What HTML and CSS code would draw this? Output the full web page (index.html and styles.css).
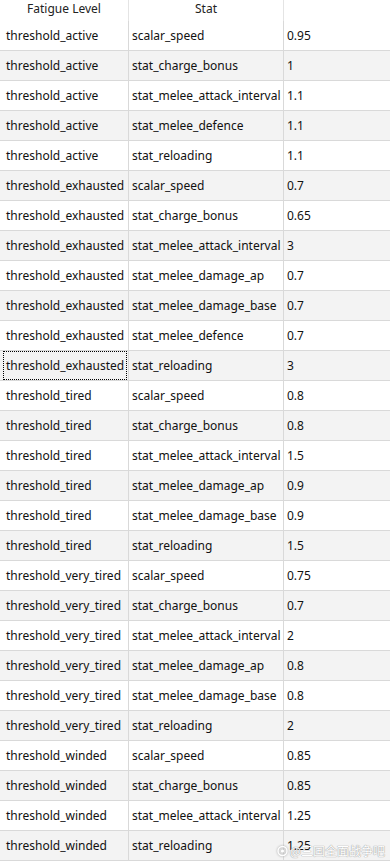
FILE: index.html
```html
<!DOCTYPE html>
<html>
<head>
<meta charset="utf-8">
<link rel="stylesheet" href="styles.css">
</head>
<body>
<div class="sheet">
  <div class="grid">
    <div class="hd c1">Fatigue Level</div><div class="hd c2">Stat</div><div class="hd c3"></div>

    <div class="cell c1">threshold_active</div><div class="cell c2">scalar_speed</div><div class="cell c3">0.95</div>
    <div class="cell c1 alt">threshold_active</div><div class="cell c2 alt">stat_charge_bonus</div><div class="cell c3 alt">1</div>
    <div class="cell c1">threshold_active</div><div class="cell c2">stat_melee_attack_interval</div><div class="cell c3">1.1</div>
    <div class="cell c1 alt">threshold_active</div><div class="cell c2 alt">stat_melee_defence</div><div class="cell c3 alt">1.1</div>
    <div class="cell c1">threshold_active</div><div class="cell c2">stat_reloading</div><div class="cell c3">1.1</div>
    <div class="cell c1 alt">threshold_exhausted</div><div class="cell c2 alt">scalar_speed</div><div class="cell c3 alt">0.7</div>
    <div class="cell c1">threshold_exhausted</div><div class="cell c2">stat_charge_bonus</div><div class="cell c3">0.65</div>
    <div class="cell c1 alt">threshold_exhausted</div><div class="cell c2 alt">stat_melee_attack_interval</div><div class="cell c3 alt">3</div>
    <div class="cell c1">threshold_exhausted</div><div class="cell c2">stat_melee_damage_ap</div><div class="cell c3">0.7</div>
    <div class="cell c1 alt">threshold_exhausted</div><div class="cell c2 alt">stat_melee_damage_base</div><div class="cell c3 alt">0.7</div>
    <div class="cell c1">threshold_exhausted</div><div class="cell c2">stat_melee_defence</div><div class="cell c3">0.7</div>
    <div class="cell c1 alt focus"><span class="focusbox"></span>threshold_exhausted</div><div class="cell c2 alt">stat_reloading</div><div class="cell c3 alt">3</div>
    <div class="cell c1">threshold_tired</div><div class="cell c2">scalar_speed</div><div class="cell c3">0.8</div>
    <div class="cell c1 alt">threshold_tired</div><div class="cell c2 alt">stat_charge_bonus</div><div class="cell c3 alt">0.8</div>
    <div class="cell c1">threshold_tired</div><div class="cell c2">stat_melee_attack_interval</div><div class="cell c3">1.5</div>
    <div class="cell c1 alt">threshold_tired</div><div class="cell c2 alt">stat_melee_damage_ap</div><div class="cell c3 alt">0.9</div>
    <div class="cell c1">threshold_tired</div><div class="cell c2">stat_melee_damage_base</div><div class="cell c3">0.9</div>
    <div class="cell c1 alt">threshold_tired</div><div class="cell c2 alt">stat_reloading</div><div class="cell c3 alt">1.5</div>
    <div class="cell c1">threshold_very_tired</div><div class="cell c2">scalar_speed</div><div class="cell c3">0.75</div>
    <div class="cell c1 alt">threshold_very_tired</div><div class="cell c2 alt">stat_charge_bonus</div><div class="cell c3 alt">0.7</div>
    <div class="cell c1">threshold_very_tired</div><div class="cell c2">stat_melee_attack_interval</div><div class="cell c3">2</div>
    <div class="cell c1 alt">threshold_very_tired</div><div class="cell c2 alt">stat_melee_damage_ap</div><div class="cell c3 alt">0.8</div>
    <div class="cell c1">threshold_very_tired</div><div class="cell c2">stat_melee_damage_base</div><div class="cell c3">0.8</div>
    <div class="cell c1 alt">threshold_very_tired</div><div class="cell c2 alt">stat_reloading</div><div class="cell c3 alt">2</div>
    <div class="cell c1">threshold_winded</div><div class="cell c2">scalar_speed</div><div class="cell c3">0.85</div>
    <div class="cell c1 alt">threshold_winded</div><div class="cell c2 alt">stat_charge_bonus</div><div class="cell c3 alt">0.85</div>
    <div class="cell c1">threshold_winded</div><div class="cell c2">stat_melee_attack_interval</div><div class="cell c3">1.25</div>
    <div class="cell c1 alt">threshold_winded</div><div class="cell c2 alt">stat_reloading</div><div class="cell c3 alt">1.25</div>
  </div>
  <div class="watermark">
    <svg class="wm-icon" width="11" height="12" viewBox="0 0 11 12"><circle cx="5.5" cy="6" r="4.5" fill="none" stroke="#fff" stroke-width="1.4"/><circle cx="5.5" cy="6" r="1.6" fill="#fff"/></svg>
    <span>@三国全面战争吧</span>
  </div>
</div>
</body>
</html>
```

FILE: styles.css
```css
html, body {
  margin: 0;
  padding: 0;
  background: #ffffff;
}
body {
  font-family: "Noto Sans", "Open Sans", "Noto Sans CJK SC", sans-serif;
  font-size: 12px;
  color: #111;
}
.sheet {
  position: relative;
  width: 390px;
  height: 862px;
  overflow: hidden;
}
.grid {
  display: grid;
  grid-template-columns: 129px 155px 1fr;
  grid-auto-rows: 30px;
  grid-template-rows: 21px;
}
.hd {
  height: 21px;
  box-sizing: border-box;
  border-right: 1px solid #e4e4e4;
  text-align: center;
  line-height: 17px;
  color: #222;
  white-space: nowrap;
}
.hd.c3 { border-right: none; }
.cell {
  box-sizing: border-box;
  height: 30px;
  border-right: 1px solid #d9d9d9;
  border-bottom: 1px solid #d9d9d9;
  line-height: 29px;
  white-space: nowrap;
  overflow: hidden;
  padding-left: 3px;
}
.cell.c1 { padding-left: 6px; }
.cell.c3 { border-right: none; }
.alt { background: #f3f3f3; }
.focus { position: relative; }
.focusbox {
  position: absolute;
  left: 3px;
  top: 0px;
  right: 1px;
  bottom: 0px;
  border: 1px dotted #000;
}
.watermark {
  position: absolute;
  right: 5px;
  bottom: 4px;
  display: flex;
  align-items: center;
  gap: 2px;
  color: #ffffff;
  font-family: "Noto Sans CJK SC", sans-serif;
  font-size: 12px;
  line-height: 14px;
  text-shadow: 0 0 1px #9a9a9a, 0 0 1px #9a9a9a;
}
.wm-icon {
  filter: drop-shadow(0 0 1px #9a9a9a);
}
```
